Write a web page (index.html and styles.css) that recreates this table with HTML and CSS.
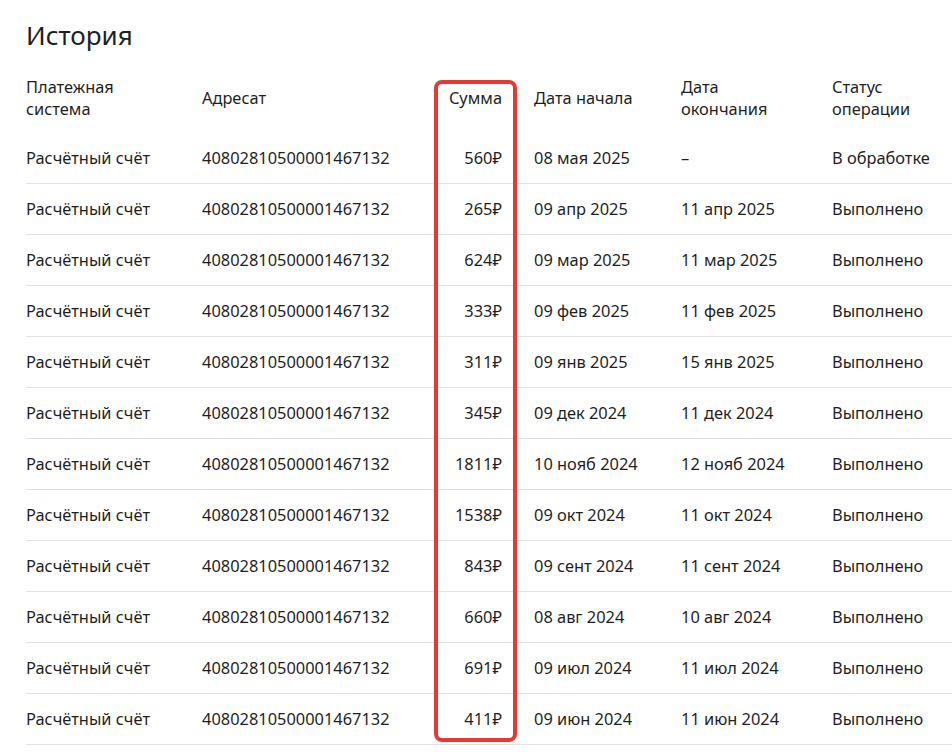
FILE: index.html
```html
<!DOCTYPE html>
<html lang="ru">
<head>
<meta charset="utf-8">
<title>История</title>
<link rel="stylesheet" href="styles.css">
</head>
<body>
<main class="page">
  <h1 class="title">История</h1>
  <div class="table-wrap">
    <table class="history">
      <colgroup>
        <col class="c-system">
        <col class="c-addr">
        <col class="c-sum">
        <col class="c-start">
        <col class="c-end">
        <col class="c-status">
      </colgroup>
      <thead>
        <tr>
          <th>Платежная<br>система</th>
          <th>Адресат</th>
          <th class="num">Сумма</th>
          <th>Дата начала</th>
          <th>Дата<br>окончания</th>
          <th>Статус<br>операции</th>
        </tr>
      </thead>
      <tbody>
        <tr><td>Расчётный счёт</td><td>40802810500001467132</td><td class="num">560₽</td><td>08 мая 2025</td><td>–</td><td>В обработке</td></tr>
        <tr><td>Расчётный счёт</td><td>40802810500001467132</td><td class="num">265₽</td><td>09 апр 2025</td><td>11 апр 2025</td><td>Выполнено</td></tr>
        <tr><td>Расчётный счёт</td><td>40802810500001467132</td><td class="num">624₽</td><td>09 мар 2025</td><td>11 мар 2025</td><td>Выполнено</td></tr>
        <tr><td>Расчётный счёт</td><td>40802810500001467132</td><td class="num">333₽</td><td>09 фев 2025</td><td>11 фев 2025</td><td>Выполнено</td></tr>
        <tr><td>Расчётный счёт</td><td>40802810500001467132</td><td class="num">311₽</td><td>09 янв 2025</td><td>15 янв 2025</td><td>Выполнено</td></tr>
        <tr><td>Расчётный счёт</td><td>40802810500001467132</td><td class="num">345₽</td><td>09 дек 2024</td><td>11 дек 2024</td><td>Выполнено</td></tr>
        <tr><td>Расчётный счёт</td><td>40802810500001467132</td><td class="num">1811₽</td><td>10 нояб 2024</td><td>12 нояб 2024</td><td>Выполнено</td></tr>
        <tr><td>Расчётный счёт</td><td>40802810500001467132</td><td class="num">1538₽</td><td>09 окт 2024</td><td>11 окт 2024</td><td>Выполнено</td></tr>
        <tr><td>Расчётный счёт</td><td>40802810500001467132</td><td class="num">843₽</td><td>09 сент 2024</td><td>11 сент 2024</td><td>Выполнено</td></tr>
        <tr><td>Расчётный счёт</td><td>40802810500001467132</td><td class="num">660₽</td><td>08 авг 2024</td><td>10 авг 2024</td><td>Выполнено</td></tr>
        <tr><td>Расчётный счёт</td><td>40802810500001467132</td><td class="num">691₽</td><td>09 июл 2024</td><td>11 июл 2024</td><td>Выполнено</td></tr>
        <tr><td>Расчётный счёт</td><td>40802810500001467132</td><td class="num">411₽</td><td>09 июн 2024</td><td>11 июн 2024</td><td>Выполнено</td></tr>
      </tbody>
    </table>
    <div class="highlight" aria-hidden="true"></div>
  </div>
</main>
</body>
</html>
```

FILE: styles.css
```css
html, body {
  margin: 0;
  padding: 0;
  overflow: hidden;
  background: #ffffff;
}

body {
  font-family: "Noto Sans", "Open Sans", "DejaVu Sans", sans-serif;
  color: #1f1f1f;
  font-size: 16.4px;
}

.page {
  padding: 0 0 0 26px;
}

.title {
  margin: 0;
  padding-top: 17px;
  font-size: 26px;
  line-height: 36px;
  font-weight: 400;
  color: #1f1f1f;
}

.table-wrap {
  position: relative;
  margin-top: 10px;
  width: 960px;
}

.history {
  border-collapse: collapse;
  table-layout: fixed;
  width: 960px;
}

.c-system { width: 176px; }
.c-addr { width: 230px; }
.c-sum { width: 102px; }
.c-start { width: 147px; }
.c-end { width: 151px; }
.c-status { width: 154px; }

.history th {
  font-weight: 400;
  text-align: left;
  vertical-align: middle;
  line-height: 22px;
  height: 70px;
  padding: 0;
}

.history td {
  line-height: 22px;
  height: 50px;
  padding: 0;
  vertical-align: middle;
  white-space: nowrap;
}

.history tbody tr {
  border-bottom: 1px solid #e3e3e3;
}

.history .num {
  text-align: right;
  padding-right: 32px;
}

.highlight {
  position: absolute;
  left: 408px;
  top: 17px;
  width: 75px;
  height: 654px;
  border: 4px solid #e53935;
  border-radius: 8px;
  pointer-events: none;
}
```
